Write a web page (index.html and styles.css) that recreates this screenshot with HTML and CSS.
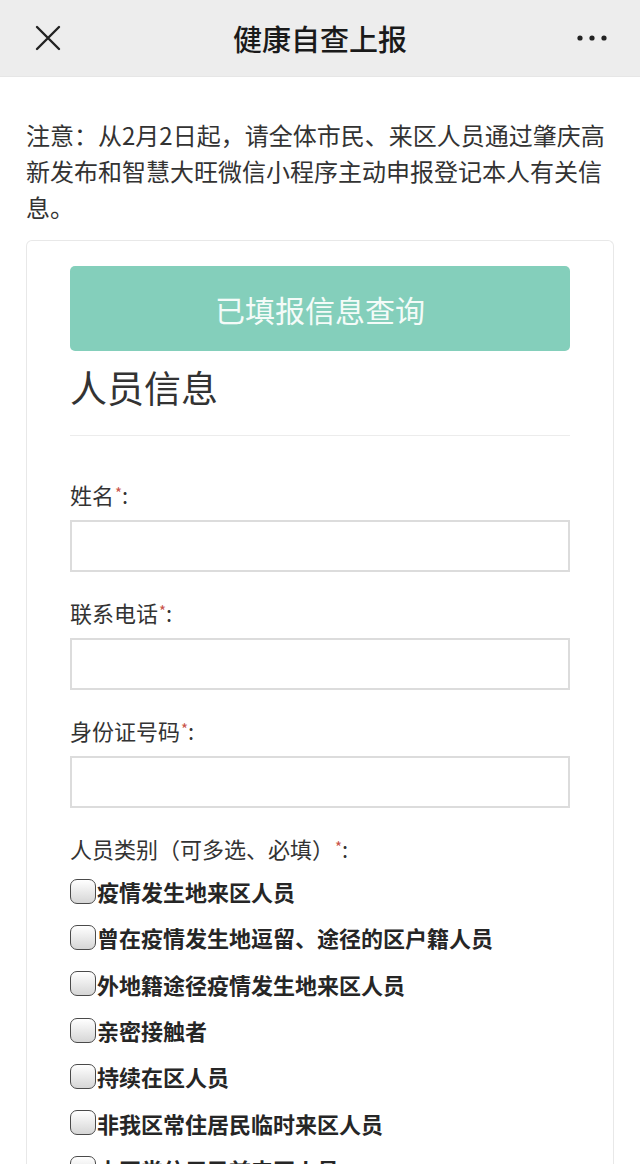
FILE: index.html
```html
<!DOCTYPE html>
<html lang="zh-CN">
<head>
<meta charset="utf-8">
<title>健康自查上报</title>
<link rel="stylesheet" href="styles.css">
</head>
<body>
<header class="topbar">
  <div class="bar-left">
    <svg class="icon-close" width="26" height="26" viewBox="0 0 26 26" aria-hidden="true">
      <path d="M2 2 L24 24 M24 2 L2 24" stroke="#222" stroke-width="2.4" stroke-linecap="round" fill="none"/>
    </svg>
  </div>
  <h1 class="bar-title">健康自查上报</h1>
  <div class="bar-right">
    <svg class="icon-more" width="30" height="6" viewBox="0 0 30 6" aria-hidden="true">
      <circle cx="3" cy="3" r="2.6" fill="#222"/>
      <circle cx="15" cy="3" r="2.6" fill="#222"/>
      <circle cx="27" cy="3" r="2.6" fill="#222"/>
    </svg>
  </div>
</header>

<p class="notice">注意：从2月2日起，请全体市民、来区人员通过肇庆高新发布和智慧大旺微信小程序主动申报登记本人有关信息。</p>

<main class="card">
  <button class="query-btn" type="button">已填报信息查询</button>
  <h2 class="section-title">人员信息</h2>
  <hr class="divider">

  <div class="field">
    <label class="field-label">姓名<span class="req">*</span>:</label>
    <input class="text-input" type="text">
  </div>
  <div class="field">
    <label class="field-label">联系电话<span class="req">*</span>:</label>
    <input class="text-input" type="text">
  </div>
  <div class="field">
    <label class="field-label">身份证号码<span class="req">*</span>:</label>
    <input class="text-input" type="text">
  </div>

  <div class="field field-check">
    <div class="field-label">人员类别（可多选、必填）<span class="req">*</span>:</div>
    <ul class="check-list">
      <li><label class="check-item"><input type="checkbox" class="check">疫情发生地来区人员</label></li>
      <li><label class="check-item"><input type="checkbox" class="check">曾在疫情发生地逗留、途径的区户籍人员</label></li>
      <li><label class="check-item"><input type="checkbox" class="check">外地籍途径疫情发生地来区人员</label></li>
      <li><label class="check-item"><input type="checkbox" class="check">亲密接触者</label></li>
      <li><label class="check-item"><input type="checkbox" class="check">持续在区人员</label></li>
      <li><label class="check-item"><input type="checkbox" class="check">非我区常住居民临时来区人员</label></li>
      <li><label class="check-item"><input type="checkbox" class="check">本区常住居民前来区人员</label></li>
    </ul>
  </div>
</main>
</body>
</html>
```

FILE: styles.css
```css
* { box-sizing: border-box; }

html, body {
  margin: 0;
  padding: 0;
  background: #ffffff;
  font-family: "Noto Sans CJK SC", "Noto Sans", sans-serif;
  color: #333333;
}

body { overflow: hidden; }

.topbar {
  height: 77px;
  background: #ededed;
  display: grid;
  grid-template-columns: 1fr auto 1fr;
  align-items: center;
  border-bottom: 1px solid #e6e6e6;
}

.bar-left {
  padding-left: 35px;
  display: flex;
  align-items: center;
}

.bar-right {
  padding-right: 33px;
  display: flex;
  justify-content: flex-end;
  align-items: center;
}

.bar-title {
  margin: 0;
  font-size: 29px;
  font-weight: 500;
  color: #1a1a1a;
  line-height: 40px;
}

.notice {
  margin: 0;
  padding: 40px 26px 0;
  font-size: 24px;
  line-height: 36px;
  color: #333333;
}

.card {
  margin: 15px 26px 0;
  border: 1px solid #e8e8e8;
  border-bottom: none;
  border-radius: 6px 6px 0 0;
  padding: 25px 43px 0;
}

.query-btn {
  display: block;
  width: 100%;
  height: 85px;
  border: none;
  border-radius: 5px;
  background: #84cfbb;
  color: #f4fbf8;
  font-family: inherit;
  font-size: 30px;
  font-weight: 400;
  padding: 0;
}

.section-title {
  margin: 11px 0 0;
  font-size: 37px;
  font-weight: 400;
  line-height: 50px;
  color: #333333;
}

.divider {
  margin: 23px 0 0;
  border: none;
  border-top: 1px solid #ececec;
  height: 0;
}

.field { margin-top: 24px; }
.field:first-of-type { margin-top: 42px; }

.field-label {
  display: block;
  font-size: 22px;
  line-height: 30px;
  color: #333333;
}

.req {
  color: #c9534a;
  font-size: 15px;
  vertical-align: 5px;
  margin-left: 1px;
}

.text-input {
  display: block;
  width: 100%;
  height: 52px;
  margin-top: 11px;
  border: 2px solid #dcdcdc;
  border-radius: 0;
  background: #ffffff;
  font-family: inherit;
  font-size: 22px;
  padding: 0 10px;
}

.check-list {
  list-style: none;
  margin: 5px 0 0;
  padding: 0;
}

.check-item {
  display: flex;
  align-items: center;
  height: 46.3px;
  font-size: 22px;
  font-weight: 700;
  color: #262626;
}

.check {
  appearance: none;
  -webkit-appearance: none;
  width: 26px;
  height: 25px;
  margin: 0 1px 0 0;
  border: 1.5px solid #4a4a4a;
  border-radius: 7px;
  background: linear-gradient(#ffffff, #d6d6d6);
  flex: none;
}
```
